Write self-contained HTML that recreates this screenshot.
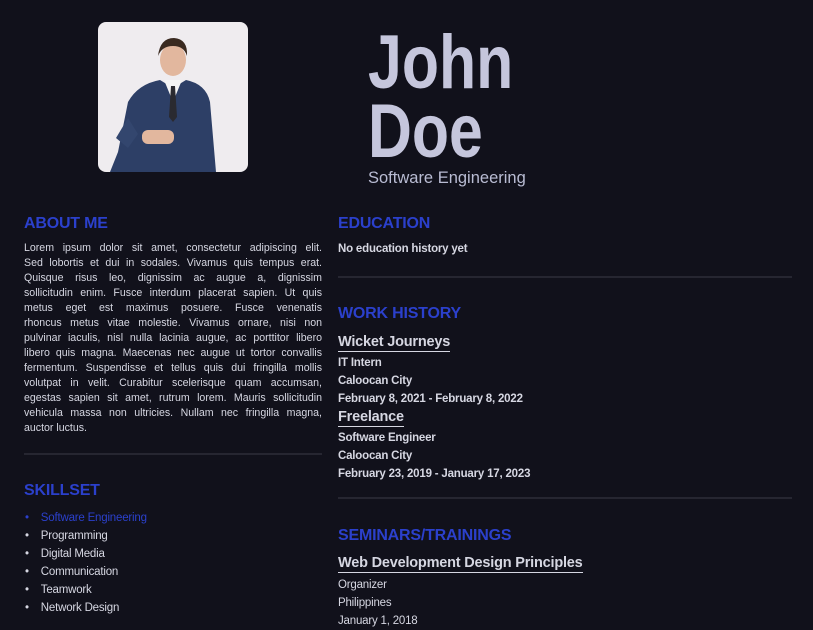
<!DOCTYPE html>
<html><head><meta charset="utf-8"><style>
*{margin:0;padding:0;box-sizing:border-box}
body{width:813px;height:625px;overflow:hidden;background:#11111b;font-family:"Liberation Sans",sans-serif;color:#d6d7e2;position:relative}
.a{position:absolute;white-space:nowrap}
h2{position:absolute;font-size:16px;font-weight:bold;color:#2b40cc;letter-spacing:-0.2px}
.about{position:absolute;left:24px;top:241px;width:298px;font-size:10.6px;line-height:15px}
.about div{text-align:justify;text-align-last:justify;white-space:nowrap;overflow:visible}
.about div.l{text-align-last:left}
.hr{position:absolute;height:2px;background:#262631}
.t{font-size:14.5px;font-weight:bold;color:#d6d7e2;border-bottom:1px solid #d6d7e2;padding-bottom:1px;letter-spacing:-0.2px}
.s{font-size:11.5px;font-weight:bold;letter-spacing:-0.2px}
.n{font-size:11.5px;letter-spacing:-0.2px}
</style></head><body>
<svg class="a" style="left:98px;top:22px;border-radius:8px" width="150" height="150" viewBox="0 0 150 150">
<rect width="150" height="150" fill="#efecef"/>
<path d="M20 130 L30 80 Q40 62 62 58 L75 66 L88 58 Q108 62 112 80 L118 150 L12 150 Z" fill="#2d3f66"/>
<path d="M66 58 L75 80 L84 58 Z" fill="#f4f4f4"/>
<path d="M73 64 L77 64 L79 95 L75 100 L71 95 Z" fill="#2a2a30"/>
<ellipse cx="75" cy="38" rx="13" ry="16" fill="#e2b79e"/>
<path d="M60 34 Q62 16 76 16 Q90 17 89 34 Q86 24 75 24 Q64 24 60 34Z" fill="#3a2a20"/>
<rect x="44" y="108" width="32" height="14" rx="6" fill="#e2b79e"/>
<path d="M18 116 L30 96 L40 112 L30 126Z" fill="#33466e"/>
</svg>
<div class="a" style="left:368px;top:28px;font-size:76px;line-height:69px;color:#c5c6dc;font-weight:bold;transform:scaleX(0.8);transform-origin:0 0">John<br>Doe</div>
<div class="a" style="left:368px;top:169px;font-size:16.5px;color:#b9bcd3">Software Engineering</div>

<h2 style="left:24px;top:215px">ABOUT ME</h2>
<div class="about">
<div>Lorem ipsum dolor sit amet, consectetur adipiscing elit.</div>
<div>Sed lobortis et dui in sodales. Vivamus quis tempus erat.</div>
<div>Quisque risus leo, dignissim ac augue a, dignissim</div>
<div>sollicitudin enim. Fusce interdum placerat sapien. Ut quis</div>
<div>metus eget est maximus posuere. Fusce venenatis</div>
<div>rhoncus metus vitae molestie. Vivamus ornare, nisi non</div>
<div>pulvinar iaculis, nisl nulla lacinia augue, ac porttitor libero</div>
<div>libero quis magna. Maecenas nec augue ut tortor convallis</div>
<div>fermentum. Suspendisse et tellus quis dui fringilla mollis</div>
<div>volutpat in velit. Curabitur scelerisque quam accumsan,</div>
<div>egestas sapien sit amet, rutrum lorem. Mauris sollicitudin</div>
<div>vehicula massa non ultricies. Nullam nec fringilla magna,</div>
<div class="l">auctor luctus.</div>
</div>
<div class="hr" style="left:24px;top:453px;width:298px"></div>
<h2 style="left:24px;top:482px">SKILLSET</h2>
<div class="a n" style="left:25px;top:509px;line-height:18px;font-size:11.5px">
<div style="color:#2b40cc">•&nbsp;&nbsp;&nbsp;&nbsp;Software Engineering</div>
<div>•&nbsp;&nbsp;&nbsp;&nbsp;Programming</div>
<div>•&nbsp;&nbsp;&nbsp;&nbsp;Digital Media</div>
<div>•&nbsp;&nbsp;&nbsp;&nbsp;Communication</div>
<div>•&nbsp;&nbsp;&nbsp;&nbsp;Teamwork</div>
<div>•&nbsp;&nbsp;&nbsp;&nbsp;Network Design</div>
</div>

<h2 style="left:338px;top:215px">EDUCATION</h2>
<div class="a s" style="left:338px;top:243px">No education history yet</div>
<div class="hr" style="left:338px;top:276px;width:454px"></div>
<h2 style="left:338px;top:305px">WORK HISTORY</h2>
<div class="a t" style="left:338px;top:334px">Wicket Journeys</div>
<div class="a s" style="left:338px;top:354px;line-height:18px">IT Intern<br>Caloocan City<br>February 8, 2021 - February 8, 2022</div>
<div class="a t" style="left:338px;top:409px">Freelance</div>
<div class="a s" style="left:338px;top:429px;line-height:18px">Software Engineer<br>Caloocan City<br>February 23, 2019 - January 17, 2023</div>
<div class="hr" style="left:338px;top:497px;width:454px"></div>
<h2 style="left:338px;top:527px">SEMINARS/TRAININGS</h2>
<div class="a t" style="left:338px;top:555px">Web Development Design Principles</div>
<div class="a n" style="left:338px;top:576px;line-height:18px">Organizer<br>Philippines<br>January 1, 2018</div>
</body></html>
